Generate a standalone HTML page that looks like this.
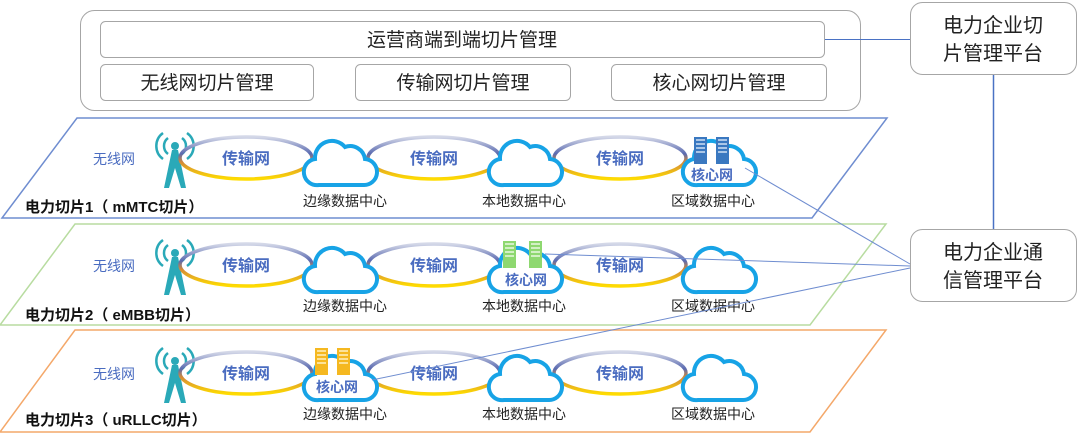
<!DOCTYPE html>
<html><head><meta charset="utf-8"><style>
html,body{margin:0;padding:0;background:#fff;width:1080px;height:441px;overflow:hidden}
svg text{font-family:"Liberation Sans","Noto Sans CJK SC",sans-serif}
</style></head><body>
<svg width="1080" height="441" viewBox="0 0 1080 441" xmlns="http://www.w3.org/2000/svg">
<defs>
<linearGradient id="eg" x1="0" y1="0" x2="0" y2="1">
<stop offset="0" stop-color="#d4d8e8"/><stop offset="0.4" stop-color="#5a6ab0"/><stop offset="0.6" stop-color="#d48a38"/><stop offset="1" stop-color="#ffdc00"/>
</linearGradient>
<g id="cloud"><path d="M14,54 H58 A13,13 0 0 0 60,28 A15,15 0 0 0 40,16 A17,17 0 0 0 10,28 A13,13 0 0 0 14,54 Z" fill="#fff" stroke="#17a3e6" stroke-width="4"/></g>
<g id="ell"><ellipse cx="0" cy="0" rx="66" ry="21" fill="none" stroke="url(#eg)" stroke-width="3.5"/><text x="0" y="6" text-anchor="middle" font-size="16" font-weight="bold" fill="#4a6cc0">传输网</text></g>
<g id="tower" fill="#2aa9b8" stroke="#2aa9b8">
<path d="M12,22 L4,60 L9,60 L15,40 L21,60 L26,60 L18,22 Z" stroke="none"/>
<circle cx="15" cy="18" r="4" stroke="none"/>
<path d="M8,10 A10,10 0 0 0 8,26 M22,10 A10,10 0 0 1 22,26 M3,5 A16,16 0 0 0 3,31 M27,5 A16,16 0 0 1 27,31" fill="none" stroke-width="2.5"/>
</g>
</defs>
<rect x="80.5" y="10.5" width="780" height="100" rx="14" fill="#fff" stroke="#a6a6a6"/>
<rect x="100.5" y="21.5" width="724" height="36" rx="5" fill="#fff" stroke="#a6a6a6"/>
<text x="462" y="46" text-anchor="middle" font-size="19" fill="#222">运营商端到端切片管理</text>
<rect x="100.5" y="64.5" width="213" height="36" rx="5" fill="#fff" stroke="#a6a6a6"/>
<text x="207" y="89" text-anchor="middle" font-size="19" fill="#222">无线网切片管理</text>
<rect x="355.5" y="64.5" width="215" height="36" rx="5" fill="#fff" stroke="#a6a6a6"/>
<text x="463" y="89" text-anchor="middle" font-size="19" fill="#222">传输网切片管理</text>
<rect x="611.5" y="64.5" width="215" height="36" rx="5" fill="#fff" stroke="#a6a6a6"/>
<text x="719" y="89" text-anchor="middle" font-size="19" fill="#222">核心网切片管理</text>
<line x1="825" y1="39.5" x2="910" y2="39.5" stroke="#4a72c4"/>
<line x1="993.5" y1="74" x2="993.5" y2="229" stroke="#4a72c4" stroke-width="1.5"/>
<rect x="910.5" y="2.5" width="166" height="72" rx="12" fill="#fff" stroke="#a6a6a6"/>
<text x="993" y="32" text-anchor="middle" font-size="20" fill="#222">电力企业切</text>
<text x="993" y="60" text-anchor="middle" font-size="20" fill="#222">片管理平台</text>
<rect x="910.5" y="229.5" width="166" height="72" rx="12" fill="#fff" stroke="#a6a6a6"/>
<text x="993" y="259" text-anchor="middle" font-size="20" fill="#222">电力企业通</text>
<text x="993" y="287" text-anchor="middle" font-size="20" fill="#222">信管理平台</text>
<polygon points="77,118 887,118 812,218 2,218" fill="none" stroke="#6f8dd0" stroke-width="1.5"/>
<polygon points="75,224 886,224 810,325 0,325" fill="none" stroke="#b8dca0" stroke-width="1.5"/>
<polygon points="75,330 886,330 810,432 0,432" fill="none" stroke="#f4a86a" stroke-width="1.5"/>
<text x="93" y="164" font-size="14" fill="#4a6cc0">无线网</text>
<use href="#tower" x="160" y="128"/>
<use href="#ell" x="246" y="158"/>
<use href="#ell" x="434" y="158"/>
<use href="#ell" x="620" y="158"/>
<use href="#cloud" x="305" y="131"/>
<use href="#cloud" x="490" y="131"/>
<use href="#cloud" x="684" y="131"/>
<text x="345" y="206" text-anchor="middle" font-size="14" fill="#222">边缘数据中心</text>
<text x="524" y="206" text-anchor="middle" font-size="14" fill="#222">本地数据中心</text>
<text x="713" y="206" text-anchor="middle" font-size="14" fill="#222">区域数据中心</text>
<text x="25" y="212" font-size="15" font-weight="bold" fill="#111">电力切片1（ mMTC切片）</text>
<rect x="694" y="137" width="13" height="27" fill="#3a78c0"/><rect x="716" y="137" width="13" height="27" fill="#3a78c0"/>
<path d="M696,140h9M696,144h9M696,148h9M696,152h9M718,140h9M718,144h9M718,148h9M718,152h9" stroke="#cfe0f4" stroke-width="1.5"/>
<text x="712" y="180" text-anchor="middle" font-size="14" font-weight="bold" fill="#4a6cc0">核心网</text>
<text x="93" y="271" font-size="14" fill="#4a6cc0">无线网</text>
<use href="#tower" x="160" y="235"/>
<use href="#ell" x="246" y="265"/>
<use href="#ell" x="434" y="265"/>
<use href="#ell" x="620" y="265"/>
<use href="#cloud" x="305" y="238"/>
<use href="#cloud" x="490" y="238"/>
<use href="#cloud" x="684" y="238"/>
<text x="345" y="311" text-anchor="middle" font-size="14" fill="#222">边缘数据中心</text>
<text x="524" y="311" text-anchor="middle" font-size="14" fill="#222">本地数据中心</text>
<text x="713" y="311" text-anchor="middle" font-size="14" fill="#222">区域数据中心</text>
<text x="25" y="320" font-size="15" font-weight="bold" fill="#111">电力切片2（ eMBB切片）</text>
<rect x="503" y="241" width="13" height="27" fill="#8ed870"/><rect x="529" y="241" width="13" height="27" fill="#8ed870"/>
<path d="M505,244h9M505,248h9M505,252h9M505,256h9M531,244h9M531,248h9M531,252h9M531,256h9" stroke="#e8f8e0" stroke-width="1.5"/>
<text x="526" y="285" text-anchor="middle" font-size="14" font-weight="bold" fill="#4a6cc0">核心网</text>
<text x="93" y="379" font-size="14" fill="#4a6cc0">无线网</text>
<use href="#tower" x="160" y="343"/>
<use href="#ell" x="246" y="373"/>
<use href="#ell" x="434" y="373"/>
<use href="#ell" x="620" y="373"/>
<use href="#cloud" x="305" y="346"/>
<use href="#cloud" x="490" y="346"/>
<use href="#cloud" x="684" y="346"/>
<text x="345" y="419" text-anchor="middle" font-size="14" fill="#222">边缘数据中心</text>
<text x="524" y="419" text-anchor="middle" font-size="14" fill="#222">本地数据中心</text>
<text x="713" y="419" text-anchor="middle" font-size="14" fill="#222">区域数据中心</text>
<text x="25" y="425" font-size="15" font-weight="bold" fill="#111">电力切片3（ uRLLC切片）</text>
<rect x="315" y="348" width="13" height="27" fill="#f5b820"/><rect x="337" y="348" width="13" height="27" fill="#f5b820"/>
<path d="M317,351h9M317,355h9M317,359h9M317,363h9M339,351h9M339,355h9M339,359h9M339,363h9" stroke="#fff0c0" stroke-width="1.5"/>
<text x="337" y="392" text-anchor="middle" font-size="14" font-weight="bold" fill="#4a6cc0">核心网</text>
<line x1="745" y1="168" x2="910" y2="264" stroke="#6f8dd0"/>
<line x1="545" y1="254" x2="910" y2="266" stroke="#6f8dd0"/>
<line x1="372" y1="380" x2="910" y2="268" stroke="#6f8dd0"/>
</svg>
</body></html>
